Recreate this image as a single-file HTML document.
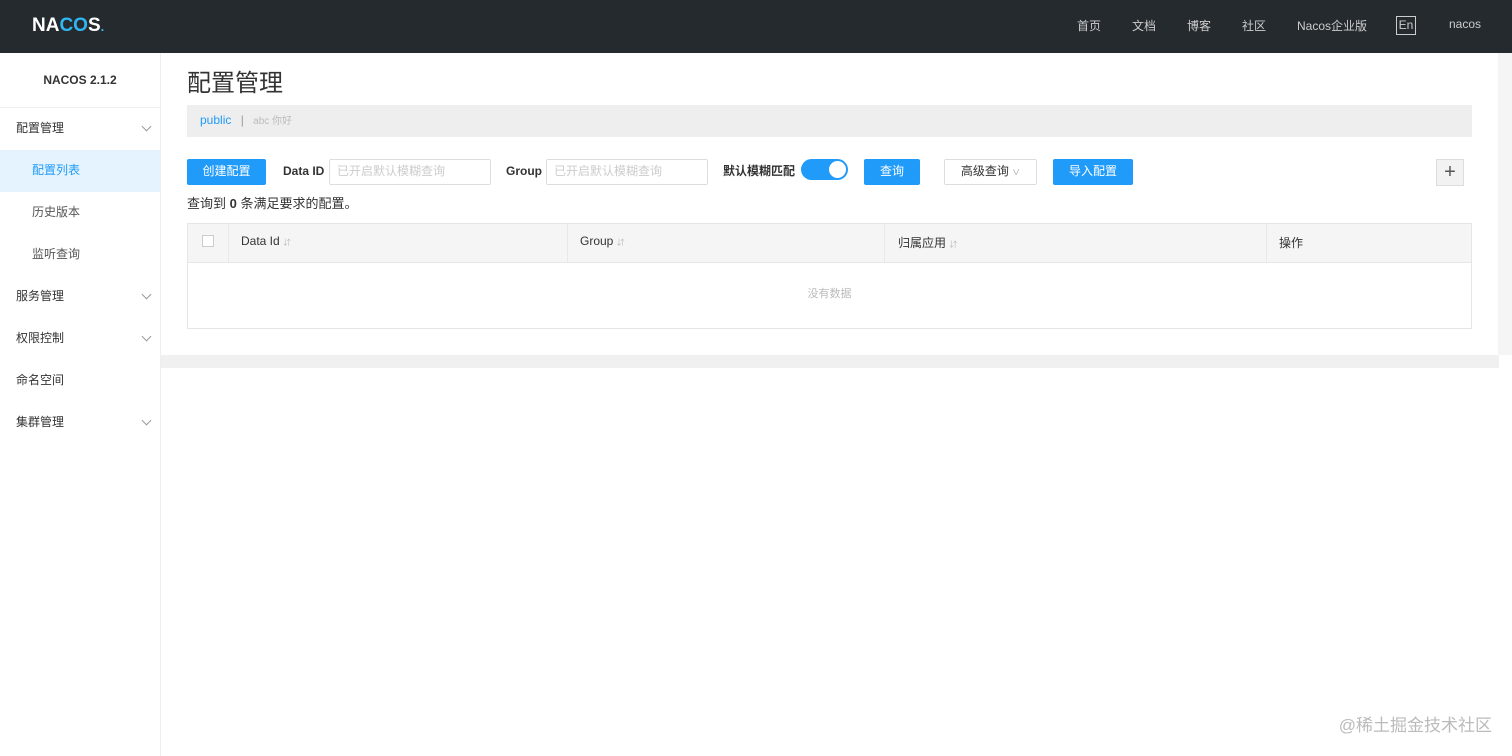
<!DOCTYPE html>
<html><head><meta charset="utf-8"><style>
*{box-sizing:border-box;margin:0;padding:0}
body{width:1512px;height:756px;overflow:hidden;background:#fff;font-family:"Liberation Sans","Noto Sans CJK SC",sans-serif;font-size:12px;color:#333;position:relative}
.hd{position:absolute;left:0;top:0;width:1512px;height:53px;background:#252a2f}
.logo{position:absolute;left:32px;top:15px;color:#fff;font-size:19px;font-weight:bold;letter-spacing:0px}
.nav{position:absolute;top:17px;color:#ccc;font-size:12px}
.en{position:absolute;left:1396px;top:16px;width:20px;height:19px;border:1px solid #ccc;color:#ccc;font-size:12px;text-align:center;line-height:17px}
.sb{position:absolute;left:0;top:53px;width:161px;height:703px;border-right:1px solid #eee}
.ver{height:55px;border-bottom:1px solid #eee;text-align:center;font-weight:bold;line-height:55px;font-size:12px;color:#333}
.mi{height:42px;line-height:40px;padding-left:16px;position:relative;color:#333}
.mi.sub{padding-left:32px;color:#555}
.mi.act{background:#e4f3fe;color:#209bfa}
.arr{position:absolute;right:10px;top:15px;width:7px;height:7px;border-right:1px solid #999;border-bottom:1px solid #999;transform:rotate(45deg)}
.main{position:absolute;left:161px;top:53px;right:0}
h1{position:absolute;left:26px;top:16px;font-size:24px;line-height:30px;font-weight:normal;color:#333}
.bc{position:absolute;left:26px;top:52px;width:1285px;height:32px;background:#eee;line-height:30px;padding-left:13px;color:#209bfa}
.btn{position:absolute;height:26px;line-height:24px;text-align:center;background:#209bfa;color:#fff;border-radius:2px}
.inp{position:absolute;height:26px;width:162px;border:1px solid #ddd;color:#ccc;line-height:22px;padding-left:7px;border-radius:2px}
.lb{position:absolute;top:110px;line-height:16px;font-weight:bold;color:#333}
.tbl{position:absolute;left:26px;top:170px;width:1285px;height:106px;border:1px solid #e6e6e6}
.th{height:39px;background:#f5f5f5;border-bottom:1px solid #e6e6e6;position:relative}
.th span{position:absolute;top:10px;color:#333}
.th i{position:absolute;top:0;width:1px;height:38px;background:#e8e8e8}
</style></head><body>
<div class="hd">
<div class="logo">NA<span style="color:#2fb6f0">CO</span>S<span style="color:#2fb6f0;font-size:13px">.</span></div>
<span class="nav" style="left:1077px">首页</span>
<span class="nav" style="left:1132px">文档</span>
<span class="nav" style="left:1187px">博客</span>
<span class="nav" style="left:1242px">社区</span>
<span class="nav" style="left:1297px">Nacos企业版</span>
<div class="en">En</div>
<span class="nav" style="left:1449px">nacos</span>
</div>
<div class="sb">
<div class="ver">NACOS 2.1.2</div>
<div class="mi">配置管理<span class="arr"></span></div>
<div class="mi sub act">配置列表</div>
<div class="mi sub">历史版本</div>
<div class="mi sub">监听查询</div>
<div class="mi">服务管理<span class="arr"></span></div>
<div class="mi">权限控制<span class="arr"></span></div>
<div class="mi">命名空间</div>
<div class="mi">集群管理<span class="arr"></span></div>
</div>
<div class="main">
<h1>配置管理</h1>
<div class="bc">public <span style="color:#999;margin:0 6px">|</span> <span style="color:#bbb;font-size:10px">abc 你好</span></div>
<div class="btn" style="left:26px;top:106px;width:79px">创建配置</div>
<span class="lb" style="left:122px">Data ID</span>
<div class="inp" style="left:168px;top:106px">已开启默认模糊查询</div>
<span class="lb" style="left:345px">Group</span>
<div class="inp" style="left:385px;top:106px">已开启默认模糊查询</div>
<span class="lb" style="left:562px">默认模糊匹配</span>
<div style="position:absolute;left:640px;top:106px;width:47px;height:21px;border-radius:11px;background:#209bfa"><div style="position:absolute;right:2px;top:2px;width:17px;height:17px;border-radius:50%;background:#fff"></div></div>
<div class="btn" style="left:703px;top:106px;width:56px">查询</div>
<div class="btn" style="left:783px;top:106px;width:93px;background:#fff;border:1px solid #ddd;color:#333;line-height:22px">高级查询 <span style="font-size:8px;color:#999">∨</span></div>
<div class="btn" style="left:892px;top:106px;width:80px">导入配置</div>
<div style="position:absolute;left:1275px;top:106px;width:28px;height:27px;background:#f2f2f2;border:1px solid #ddd;text-align:center;line-height:24px;font-size:20px;color:#555">+</div>
<div style="position:absolute;left:26px;top:140px;font-size:13px;color:#333">查询到 <b>0</b> 条满足要求的配置。</div>
<div class="tbl">
<div class="th">
<div style="position:absolute;left:14px;top:11px;width:12px;height:12px;border:1px solid #ccc;background:#fff"></div>
<i style="left:40px"></i><span style="left:53px">Data Id <small style="color:#bbb;font-size:8px">⇵</small></span>
<i style="left:379px"></i><span style="left:392px">Group <small style="color:#bbb;font-size:8px">⇵</small></span>
<i style="left:696px"></i><span style="left:710px">归属应用 <small style="color:#bbb;font-size:8px">⇵</small></span>
<i style="left:1078px"></i><span style="left:1091px">操作</span>
</div>
<div style="text-align:center;line-height:62px;color:#bbb;font-size:11px">没有数据</div>
</div>
<div style="position:absolute;left:0;top:302px;width:1338px;height:13px;background:#f0f0f0"></div>
<div style="position:absolute;left:1337px;top:0;width:14px;height:302px;background:#f5f5f5"></div>
</div>
<div style="position:absolute;right:20px;bottom:20px;color:#bbb;font-size:17px">@稀土掘金技术社区</div>
</body></html>
